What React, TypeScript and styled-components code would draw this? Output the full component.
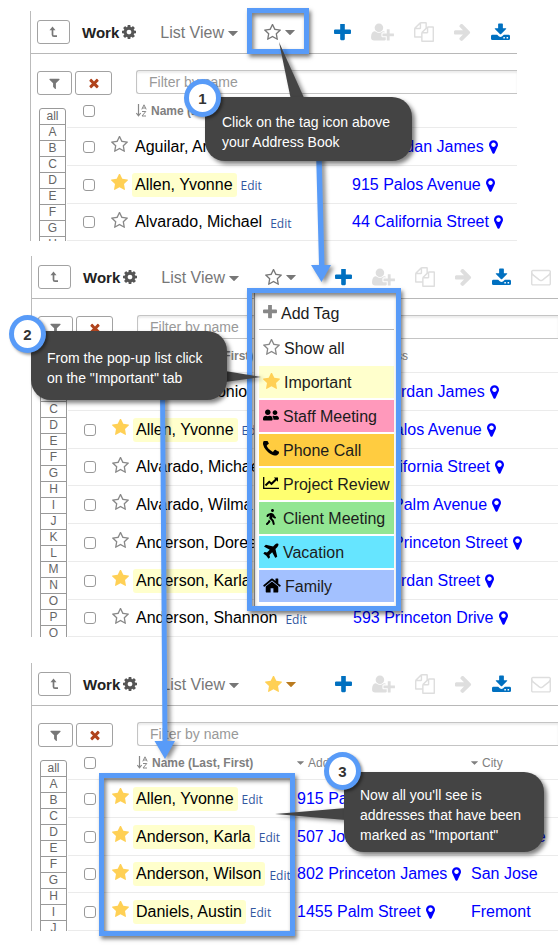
import React from "react";
import styled, { createGlobalStyle, css } from "styled-components";
import { FaUserFriends, FaWalking } from "react-icons/fa";

const GlobalStyle = createGlobalStyle`
  * { box-sizing: border-box; }
  body { margin: 0; background: #fff; color: #000; font-family: "Liberation Sans", Arial, sans-serif; font-size: 16px; }
  button { font: inherit; color: inherit; background: none; border: 0; padding: 0; cursor: pointer; }
  svg { display: block; flex: none; }
`;

const BLUE = "#589bf8";

/* ---------- icons ---------- */

const paths = {
  cog: "M1152 896q0-106-75-181t-181-75-181 75-75 181 75 181 181 75 181-75 75-181zm512-109v222q0 12-8 23t-20 13l-185 28q-19 54-39 91 35 50 107 138 10 12 10 25t-9 23q-27 37-99 108t-94 71q-12 0-26-9l-138-108q-44 23-91 38-16 136-29 186-7 28-36 28h-222q-14 0-24.5-8.5t-11.5-21.5l-28-184q-49-16-90-37l-141 107q-10 9-25 9-14 0-25-11-126-114-165-168-7-10-7-23 0-12 8-23 15-21 51-66.5t54-70.5q-27-50-41-99l-183-27q-13-2-21-12.5t-8-23.5v-222q0-12 8-23t19-13l186-28q14-46 39-92-40-57-107-138-10-12-10-24 0-10 9-23 26-36 98.5-107.5t94.5-71.5q13 0 26 10l138 107q44-23 91-38 16-136 29-186 7-28 36-28h222q14 0 24.5 8.5t11.5 21.5l28 184q49 16 90 37l142-107q9-9 24-9 13 0 25 10 129 119 165 170 7 8 7 22 0 12-8 23-15 21-51 66.5t-54 70.5q26 50 41 98l183 28q13 2 21 12.5t8 23.5z",
  plus: "M1600 736v192q0 40-28 68t-68 28h-416v416q0 40-28 68t-68 28h-192q-40 0-68-28t-28-68v-416h-416q-40 0-68-28t-28-68v-192q0-40 28-68t68-28h416v-416q0-40 28-68t68-28h192q40 0 68 28t28 68v416h416q40 0 68 28t28 68z",
  starOutline: "M1201 1004l306-297-422-62-189-382-189 382-422 62 306 297-73 421 378-199 377 199zm527-357q0 22-26 48l-363 354 86 500q1 7 1 20 0 50-41 50-19 0-40-12l-449-236-449 236q-22 12-40 12-21 0-31.5-14.5t-10.5-35.5q0-6 2-20l86-500-364-354q-25-27-25-48 0-37 56-46l502-73 225-455q19-41 49-41t49 41l225 455 502 73q56 9 56 46z",
  star: "M1728 647q0 22-26 48l-363 354 86 500q1 7 1 20 0 21-10.5 35.5t-30.5 14.5q-19 0-40-12l-449-236-449 236q-22 12-40 12-21 0-31.5-14.5t-10.5-35.5q0-6 2-20l86-500-364-354q-25-27-25-48 0-37 56-46l502-73 225-455q19-41 49-41t49 41l225 455 502 73q56 9 56 46z",
  times: "M1490 1322q0 40-28 68l-136 136q-28 28-68 28t-68-28l-294-294-294 294q-28 28-68 28t-68-28l-136-136q-28-28-28-68t28-68l294-294-294-294q-28-28-28-68t28-68l136-136q28-28 68-28t68 28l294 294 294-294q28-28 68-28t68 28l136 136q28 28 28 68t-28 68l-294 294 294 294q28 28 28 68z",
  filter: "M1595 295q17 41-14 70l-493 493v742q0 42-39 59-13 5-25 5-27 0-45-19l-256-256q-19-19-19-45v-486l-493-493q-31-29-14-70 17-39 59-39h1280q42 0 59 39z",
  mail: "M1664 1504v-768q-32 36-69 66-268 206-426 338-51 43-83 67t-86.5 48.5-102.5 24.5h-2q-48 0-102.5-24.5t-86.5-48.5-83-67q-158-132-426-338-37-30-69-66v768q0 13 9.5 22.5t22.5 9.5h1472q13 0 22.5-9.5t9.5-22.5zm0-1051v-24.5l-.5-13-3-12.5-5.5-9-9-7.5-14-2.5h-1472q-13 0-22.5 9.5t-9.5 22.5q0 168 147 284 193 152 401 317 6 5 35 29.5t46 37.5 44.5 31.5 50.5 27.5 43 9h2q20 0 43-9t50.5-27.5 44.5-31.5 46-37.5 35-29.5q208-165 401-317 54-43 100.5-115.5t46.5-131.5zm128-37v1088q0 66-47 113t-113 47h-1472q-66 0-113-47t-47-113v-1088q0-66 47-113t113-47h1472q66 0 113 47t47 113z",
  copy: "M1696 384q40 0 68 28t28 68v1216q0 40-28 68t-68 28h-960q-40 0-68-28t-28-68v-288h-544q-40 0-68-28t-28-68v-672q0-40 20-88t48-76l408-408q28-28 76-48t88-20h416q40 0 68 28t28 68v328q68-40 128-40h416zm-544 213l-299 299h299v-299zm-640-384l-299 299h299v-299zm196 647l316-316v-416h-384v416q0 40-28 68t-68 28h-416v640h512v-256q0-40 20-88t48-76zm956 804v-1152h-384v416q0 40-28 68t-68 28h-416v640h896z",
  arrow: "M1600 960q0 54-37 91l-651 651q-39 37-91 37-51 0-90-37l-75-75q-38-38-38-91t38-91l293-293h-704q-52 0-84.5-37.5t-32.5-90.5v-128q0-53 32.5-90.5t84.5-37.5h704l-293-294q-38-36-38-90t38-90l75-75q38-38 90-38 53 0 91 38l651 651q37 35 37 90z",
  userPlus: "M704 896q-159 0-271.5-112.5t-112.5-271.5 112.5-271.5 271.5-112.5 271.5 112.5 112.5 271.5-112.5 271.5-271.5 112.5zm960 128h352q13 0 22.5 9.5t9.5 22.5v192q0 13-9.5 22.5t-22.5 9.5h-352v352q0 13-9.5 22.5t-22.5 9.5h-192q-13 0-22.5-9.5t-9.5-22.5v-352h-352q-13 0-22.5-9.5t-9.5-22.5v-192q0-13 9.5-22.5t22.5-9.5h352v-352q0-13 9.5-22.5t22.5-9.5h192q13 0 22.5 9.5t9.5 22.5v352zm-736 224q0 52 38 90t90 38h256v238q-68 50-171 50h-874q-121 0-194-69t-73-190q0-53 3.5-103.5t14-109 26.5-108.5 43-97.5 62-81 85.5-53.5 111.5-20q19 0 39 17 79 61 154.5 91.5t164.5 30.5 164.5-30.5 154.5-91.5q20-17 39-17 132 0 217 96h-223q-52 0-90 38t-38 90v192z",
  phone: "M1600 1240q0 27-10 70.5t-21 68.5q-21 50-122 106-94 51-186 51-27 0-53-3.5t-57.5-12.5-47-14.5-55.5-20.5-49-18q-98-35-175-83-127-79-264-216t-216-264q-48-77-83-175-3-9-18-49t-20.5-55.5-14.5-47-12.5-57.5-3.5-53q0-92 51-186 56-101 106-122 25-11 68.5-21t70.5-10q14 0 21 3 18 6 53 76 11 19 30 54t35 63.5 31 53.5q3 4 17.5 25t21.5 35.5 7 28.5q0 20-28.5 50t-62 55-62 53-28.5 46q0 9 5 22.5t8.5 20.5 14 24 11.5 19q76 137 174 235t235 174q2 1 19 11.5t24 14 20.5 8.5 22.5 5q18 0 46-28.5t53-62 55-62 50-28.5q14 0 28.5 7t35.5 21.5 25 17.5q25 15 53.5 31t63.5 35 54 30q70 35 76 53 3 7 3 21z",
  plane: "M1568 160q44 52 12 148t-108 172l-161 161 160 696q5 19-12 33l-128 96q-7 6-19 6-4 0-7-1-15-3-21-16l-279-508-259 259 53 194q5 17-8 31l-96 96q-9 9-23 9h-2q-15-2-24-13l-189-252-252-189q-11-7-13-23-1-13 9-25l96-97q9-9 23-9 6 0 8 1l194 53 259-259-508-279q-14-8-17-24-2-16 9-27l128-128q14-13 30-8l665 159 160-160q76-76 172-108t148 12z",
  home: "M1472 992v480q0 26-19 45t-45 19h-384v-384h-256v384h-384q-26 0-45-19t-19-45v-480q0-1 .5-3t.5-3l575-474 575 474q1 2 1 6zm223-69l-62 74q-8 9-21 11h-3q-13 0-21-7l-692-577-692 577q-12 8-24 7-13-2-21-11l-62-74q-8-10-7-23.5t11-21.5l719-599q32-26 76-26t76 26l244 204v-195q0-14 9-23t23-9h192q14 0 23 9t9 23v408l219 182q10 8 11 21.5t-7 23.5z",
  pin: "M1152 640q0-106-75-181t-181-75-181 75-75 181 75 181 181 75 181-75 75-181zm256 0q0 109-33 179l-364 774q-16 33-47.5 52t-67.5 19-67.5-19-46.5-52l-365-774q-33-70-33-179 0-212 150-362t362-150 362 150 150 362z",
};

type GlyphProps = { name: keyof typeof paths; w: number; h?: number; box?: string };

const Glyph = ({ name, w, h = w, box = "0 0 1792 1792" }: GlyphProps) => (
  <svg width={w} height={h} viewBox={box} fill="currentColor" aria-hidden="true">
    <path d={paths[name]} />
  </svg>
);

const Star = ({ filled, size }: { filled?: boolean; size: number }) => (
  <Glyph name={filled ? "star" : "starOutline"} w={size} box="64 64 1664 1664" />
);

const Caret = ({ w = 10, h = 5 }: { w?: number; h?: number }) => (
  <svg width={w} height={h} viewBox="0 0 10 5" fill="currentColor" aria-hidden="true">
    <path d="M0.6 0h8.8q.8 0 .3.6L5.5 4.7q-.5.5-1 0L.3.6Q-.2 0 .6 0z" />
  </svg>
);

const UpLevelIcon = () => (
  <svg width="9" height="12" viewBox="0 0 9 12" fill="none" stroke="currentColor" aria-hidden="true">
    <path d="M3.5 3v5.700q0 1.500 1.500 1.500H8" strokeWidth="1.7" strokeLinejoin="round" />
    <path d="M3.5 0.500L6.500 4.200H0.500z" fill="currentColor" stroke="none" />
  </svg>
);

const DownloadIcon = () => (
  <svg width="19" height="18" viewBox="0 0 20 18" fill="currentColor" aria-hidden="true">
    <path d="M7.5 0.8q0-.8.8-.8h3.4q.8 0 .8.8V5h3q1 0 .4.8L10.7 11q-.7.7-1.4 0L4.1 5.8Q3.500 5 4.5 5h3z" />
    <path
      fillRule="evenodd"
      d="M1.500 12h5l2 1.800q1.500 1 3 0l2-1.800h5Q20 12 20 13.500v2.500q0 1.500-1.500 1.500h-17Q0 17.500 0 16v-2.500Q0 12 1.500 12zM13 14.200v1.600h1.600v-1.600zM16.400 14.200v1.600H18v-1.600z"
    />
  </svg>
);

const SortIcon = () => (
  <svg width="11" height="13" viewBox="0 0 11 13" aria-hidden="true">
    <path d="M2.500 0v11M0.300 9l2.200 2.800L4.700 9" fill="none" stroke="#888" strokeWidth="1.200" />
    <path d="M5.800 5.400L8 0.800l2.200 4.600M6.500 4h3M6 7.500h3.800L6 12h4" fill="none" stroke="#888" />
  </svg>
);

const ChartIcon = () => (
  <svg width="16" height="12" viewBox="0 0 16 12" fill="none" stroke="currentColor" aria-hidden="true">
    <path d="M.7 0v11.300H16" strokeWidth="1.300" />
    <path d="M2.500 8.500l3.700-3.700 2.300 2L13.500 2" strokeWidth="2" />
    <path d="M10.800 0.500H15v4.200z" fill="currentColor" stroke="none" />
  </svg>
);

/* ---------- page parts ---------- */

const Page = styled.main`
  position: relative;
  display: flex;
  flex-direction: column;
  padding: 11px 0 16px;
`;

const Panel = styled.section<{ $left: number; $right?: number; $gap?: number }>`
  margin: 0 ${(p) => p.$right ?? 0}px ${(p) => p.$gap ?? 0}px ${(p) => p.$left}px;
  border-left: 1px solid #bbb;
`;

const Toolbar = styled.header`
  display: flex;
  align-items: center;
  height: 43px;
  padding-left: 6px;
  border-bottom: 1px solid #b8b8b8;
  color: #777;
`;

const BoxButton = styled.button<{ $width: number; $tone?: string }>`
  display: flex;
  flex: none;
  align-items: center;
  justify-content: center;
  width: ${(p) => p.$width}px;
  height: 24px;
  border: 1px solid #a2a2a2;
  border-radius: 3px;
  color: ${(p) => p.$tone ?? "#777"};
`;

const BookButton = styled.button`
  display: flex;
  flex: none;
  align-items: center;
  gap: 3px;
  margin-left: 12px;
  font-size: 15px;
  font-weight: bold;
  color: #222;
  svg { color: #555; }
`;

const ViewButton = styled.button`
  display: flex;
  flex: none;
  align-items: center;
  gap: 4px;
  margin: 2px 0 0 24px;
  white-space: nowrap;
`;

const TagControl = styled.div`
  position: relative;
  flex: none;
  margin: 1px 0 0 26px;
`;

const TagButton = styled.button<{ $active?: boolean }>`
  display: flex;
  align-items: center;
  gap: 4px;
  color: #777;
  ${(p) => p.$active && css`
    color: #b97a1f;
    svg:first-child { color: #ffd055; }
  `}
`;

const Actions = styled.div`
  display: flex;
  align-items: center;
  gap: 20px;
  margin-left: 39px;
`;

const Action = styled.button<{ $on?: boolean }>`
  flex: none;
  color: ${(p) => (p.$on ? "#0070c0" : "#dedede")};
`;

const FilterBar = styled.div`
  display: flex;
  gap: 3px;
  padding: 17px 0 0 6px;
`;

const FilterInput = styled.input`
  flex: 1;
  min-width: 0;
  height: 24px;
  margin: -1px 0 1px 21px;
  padding: 0 12px;
  border: 1px solid #c4c4c4;
  border-right: 0;
  border-radius: 3px 0 0 3px;
  box-shadow: inset 0 2px 2px rgba(0, 0, 0, 0.08);
  font: 14px "Liberation Sans", Arial, sans-serif;
  outline: 0;
  &::placeholder { color: #999; opacity: 1; }
`;

const Body = styled.div`
  display: flex;
  gap: 1px;
  margin-top: -1px;
  padding-left: 8px;
`;

const LetterIndex = styled.nav`
  contain: size;
  flex: none;
  width: 27px;
  padding-top: 14px;
  overflow: hidden;
`;

const LetterList = styled.div`
  display: flex;
  flex-direction: column;
  border: 1px solid #999;
  border-radius: 3px 3px 0 0;
`;

const Letter = styled.button`
  flex: none;
  height: 16px;
  border-bottom: 1px solid #999;
  font-size: 12px;
  line-height: 15px;
  color: #666;
`;

const Table = styled.table`
  flex: 1;
  min-width: 0;
  table-layout: fixed;
  border-spacing: 0;
  white-space: nowrap;
`;

const Col = styled.col<{ $w?: number }>`
  width: ${(p) => (p.$w ? `${p.$w}px` : "auto")};
`;

const HeadCell = styled.th<{ $bold?: boolean }>`
  height: 34px;
  padding: 0;
  border-bottom: 1px solid #ebebeb;
  font-size: 12px;
  font-weight: ${(p) => (p.$bold ? "bold" : "normal")};
  text-align: left;
  color: #808080;
`;

const HeadLabel = styled.span<{ $inset?: number }>`
  display: flex;
  align-items: center;
  gap: 4px;
  padding-left: ${(p) => p.$inset ?? 0}px;
`;

const Cell = styled.td`
  height: 38px;
  padding: 0;
  border-bottom: 1px solid #ebebeb;
  tr:nth-child(4n + 3) > & { height: 37px; }
`;

const Tick = styled.input`
  display: block;
  appearance: none;
  width: 12px;
  height: 12px;
  margin: 0 0 0 16px;
  border: 1px solid #999;
  border-radius: 3px;
  background: #fff;
`;

const Contact = styled.div`
  display: flex;
  align-items: center;
  padding-left: 3px;
`;

const StarButton = styled.button<{ $on?: boolean }>`
  margin: 0 4px 4px 0;
  color: ${(p) => (p.$on ? "#ffd055" : "#888")};
`;

const Name = styled.span<{ $on?: boolean }>`
  padding: 0 4px 0 3px;
  border-radius: 3px;
  line-height: 24px;
  background: ${(p) => (p.$on ? "#ffffcc" : "transparent")};
`;

const EditLink = styled.a`
  margin: 2px 0 0 4px;
  font: 12px "Open Sans", sans-serif;
  color: #3257a0;
  text-decoration: none;
`;

const Place = styled.a`
  display: flex;
  align-items: center;
  gap: 5px;
  color: #0000ff;
  text-decoration: none;
`;

const Menu = styled.div`
  position: absolute;
  top: 24px;
  left: -11px;
  z-index: 1;
  display: flex;
  flex-direction: column;
  gap: 2px;
  width: 143px;
  padding: 0 3px 4px 4px;
  border-left: 1px solid #999;
  background: #fff;
`;

const MenuItem = styled.button<{ $bg?: string; $divider?: boolean; $icon?: string }>`
  display: flex;
  align-items: center;
  gap: 4px;
  height: ${(p) => (p.$divider ? 37 : 32)}px;
  padding: ${(p) => (p.$divider ? "6px 4px 0" : "2px 4px 0")};
  border-bottom: ${(p) => (p.$divider ? "1px solid #b8b8b8" : "0")};
  background: ${(p) => p.$bg ?? "transparent"};
  color: #1c1c1c;
  white-space: nowrap;
  svg { color: ${(p) => p.$icon ?? "#000"}; }
`;

const MenuIcon = styled.span<{ $w?: number }>`
  display: flex;
  flex: none;
  justify-content: center;
  width: ${(p) => p.$w ?? 16}px;
  padding-bottom: 4px;
`;

/* ---------- annotations lying over the panels ---------- */

const Frame = styled.div<{ $x: number; $y: number; $w: number; $h: number }>`
  position: absolute;
  z-index: 2;
  left: ${(p) => p.$x}px;
  top: ${(p) => p.$y}px;
  width: ${(p) => p.$w}px;
  height: ${(p) => p.$h}px;
  border: 5px solid ${BLUE};
  box-shadow: 2px 3px 4px rgba(0, 0, 0, 0.5), inset 2px 3px 4px rgba(0, 0, 0, 0.5);
  pointer-events: none;
`;

const Drawing = styled.svg`
  position: absolute;
  z-index: 3;
  left: 0;
  top: 0;
  overflow: visible;
  pointer-events: none;
  filter: drop-shadow(3px 2px 2px rgba(0, 0, 0, 0.45));
`;

const Callout = styled.aside<{ $x: number; $y: number; $w: number; $pad: string }>`
  position: absolute;
  z-index: 4;
  left: ${(p) => p.$x}px;
  top: ${(p) => p.$y}px;
  width: ${(p) => p.$w}px;
  padding: ${(p) => p.$pad};
  border-radius: 4px 20px 20px 20px;
  background: #444;
  box-shadow: 3px 3px 4px rgba(0, 0, 0, 0.5);
  color: #fff;
  font-size: 14px;
  line-height: 20px;
  white-space: nowrap;
`;

const Badge = styled.span<{ $x: number; $y: number }>`
  position: absolute;
  z-index: 5;
  left: ${(p) => p.$x}px;
  top: ${(p) => p.$y}px;
  display: flex;
  align-items: center;
  justify-content: center;
  width: 37px;
  height: 38px;
  border: 5px solid ${BLUE};
  border-radius: 50%;
  background: #fff;
  box-shadow: 2px 2px 3px rgba(0, 0, 0, 0.4);
  color: #333;
  font-size: 15px;
  font-weight: bold;
`;

/* ---------- data ---------- */

type Person = { name: string; street: string; city?: string; starred?: boolean };

const firstRows: Person[] = [
  { name: "Aguilar, Antonio", street: "507 Jordan James" },
  { name: "Allen, Yvonne", street: "915 Palos Avenue", starred: true },
  { name: "Alvarado, Michael", street: "44 California Street" },
];

const allRows: Person[] = [
  ...firstRows,
  { name: "Alvarado, Wilma", street: "1455 Palm Avenue" },
  { name: "Anderson, Doreen", street: "1200 Princeton Street" },
  { name: "Anderson, Karla", street: "507 Jordan Street", starred: true },
  { name: "Anderson, Shannon", street: "593 Princeton Drive" },
];

const importantRows: Person[] = [
  { name: "Allen, Yvonne", street: "915 Palos Avenue", city: "San Jose", starred: true },
  { name: "Anderson, Karla", street: "507 Jordan Street", city: "Sunnyvale", starred: true },
  { name: "Anderson, Wilson", street: "802 Princeton James", city: "San Jose", starred: true },
  { name: "Daniels, Austin", street: "1455 Palm Street", city: "Fremont", starred: true },
];

const ALPHABET = "ABCDEFGHIJKLMNOPQRSTUVWXYZ";

const lettersTo = (last: string) => ["all", ...ALPHABET.slice(0, ALPHABET.indexOf(last) + 1)];

const tags: { label: string; bg?: string; tone?: string; icon: React.ReactNode; w?: number }[] = [
  { label: "Show all", tone: "#888", icon: <Star size={17} />, w: 17 },
  { label: "Important", bg: "#ffffcc", tone: "#ffd055", icon: <Star filled size={17} />, w: 17 },
  { label: "Staff Meeting", bg: "#ff99bb", icon: <FaUserFriends size={16} /> },
  { label: "Phone Call", bg: "#ffcc40", icon: <Glyph name="phone" w={16} box="192 256 1408 1408" /> },
  { label: "Project Review", bg: "#ffff70", icon: <ChartIcon /> },
  { label: "Client Meeting", bg: "#93e693", icon: <FaWalking size={16} /> },
  { label: "Vacation", bg: "#66e5ff", icon: <Glyph name="plane" w={16} box="150 90 1490 1490" /> },
  { label: "Family", bg: "#a3c1ff", icon: <Glyph name="home" w={18} h={15} box="70 220 1652 1340" />, w: 18 },
];

/* ---------- composition ---------- */

const TagMenu = () => (
  <Menu>
    <MenuItem $divider $icon="#888">
      <MenuIcon $w={14}>
        <Glyph name="plus" w={14} box="190 190 1412 1412" />
      </MenuIcon>
      Add Tag
    </MenuItem>
    {tags.map((t) => (
      <MenuItem key={t.label} $bg={t.bg} $icon={t.tone}>
        <MenuIcon $w={t.w}>{t.icon}</MenuIcon>
        {t.label}
      </MenuItem>
    ))}
  </Menu>
);

type BookProps = {
  rows: Person[];
  last: string;
  left: number;
  right?: number;
  gap?: number;
  mail?: boolean;
  menu?: boolean;
  active?: boolean;
};

const AddressBook = ({ rows, last, left, right, gap, mail, menu, active }: BookProps) => (
  <Panel $left={left} $right={right} $gap={gap}>
    <Toolbar>
      <BoxButton $width={33} aria-label="Up one level"><UpLevelIcon /></BoxButton>
      <BookButton>Work<Glyph name="cog" w={14} box="128 128 1536 1536" /></BookButton>
      <ViewButton>List View<Caret /></ViewButton>
      <TagControl>
        <TagButton $active={active} aria-label="Tags"><Star filled={active} size={17} /><Caret /></TagButton>
        {menu && <TagMenu />}
      </TagControl>
      <Actions>
        <Action $on aria-label="Add"><Glyph name="plus" w={17} box="190 190 1412 1412" /></Action>
        <Action aria-label="Add person"><Glyph name="userPlus" w={23} h={20} box="0 0 2048 1792" /></Action>
        <Action aria-label="Copy"><Glyph name="copy" w={20} /></Action>
        <Action aria-label="Move"><Glyph name="arrow" w={17} box="190 190 1430 1550" /></Action>
        <Action $on aria-label="Download"><DownloadIcon /></Action>
        {mail && <Action aria-label="Mail"><Glyph name="mail" w={20} /></Action>}
      </Actions>
    </Toolbar>
    <FilterBar>
      <BoxButton $width={35} aria-label="Filter"><Glyph name="filter" w={13} /></BoxButton>
      <BoxButton $width={37} $tone="#b0431c" aria-label="Clear filter"><Glyph name="times" w={14} /></BoxButton>
      <FilterInput placeholder="Filter by name" aria-label="Filter by name" />
    </FilterBar>
    <Body>
      <LetterIndex aria-label="Letters">
        <LetterList>{lettersTo(last).map((l) => <Letter key={l}>{l}</Letter>)}</LetterList>
      </LetterIndex>
      <Table>
        <colgroup>
          <Col $w={41} />
          <Col $w={active ? 188 : 244} />
          <Col $w={active ? 174 : undefined} />
          {active && <Col />}
        </colgroup>
        <thead>
          <tr>
            <HeadCell><Tick type="checkbox" aria-label="Select all" /></HeadCell>
            <HeadCell $bold><HeadLabel $inset={28}><SortIcon />Name (Last, First)</HeadLabel></HeadCell>
            <HeadCell><HeadLabel><Caret w={7} h={4} />Address</HeadLabel></HeadCell>
            {active && <HeadCell><HeadLabel><Caret w={7} h={4} />City</HeadLabel></HeadCell>}
          </tr>
        </thead>
        <tbody>
          {rows.map((r) => (
            <tr key={r.name}>
              <Cell><Tick type="checkbox" aria-label={`Select ${r.name}`} /></Cell>
              <Cell>
                <Contact>
                  <StarButton $on={r.starred} aria-label="Star"><Star filled={r.starred} size={17} /></StarButton>
                  <Name $on={r.starred}>{r.name}</Name>
                  <EditLink href="#edit">Edit</EditLink>
                </Contact>
              </Cell>
              <Cell><Place href="#map">{r.street}<Glyph name="pin" w={9} h={14} box="384 128 1024 1536" /></Place></Cell>
              {active && <Cell><Place href="#city">{r.city}</Place></Cell>}
            </tr>
          ))}
        </tbody>
      </Table>
    </Body>
  </Panel>
);

export default function App() {
  return (
    <>
      <GlobalStyle />
      <Page>
        <AddressBook rows={firstRows} last="H" left={30} right={41} gap={15} />
        <AddressBook rows={allRows} last="Q" left={31} gap={26} mail menu />
        <AddressBook rows={importantRows} last="J" left={31} mail active />

        <Frame $x={247} $y={8} $w={62} $h={46} />
        <Frame $x={247} $y={288} $w={154} $h={323} />
        <Frame $x={99} $y={773} $w={196} $h={163} />

        <Drawing width="558" height="948" viewBox="0 0 558 948" aria-hidden="true">
          <g fill={BLUE}>
            <path d="M316 150h5.500l3 115h6.500l-9.500 17-10.500-17h8z" />
            <path d="M160 390h5l2.500 351h7.500l-10 18-10.500-18h8z" />
          </g>
          <g fill="#444">
            <path d="M279 42l26 58h-14z" />
            <path d="M261 377l-36-6v11z" />
            <path d="M275 814l71-6v12z" />
          </g>
        </Drawing>

        <Callout $x={205} $y={97} $w={207} $pad="15px 16px 9px 17px">
          Click on the tag icon above<br />your Address Book
        </Callout>
        <Callout $x={31} $y={331} $w={196} $pad="17px 16px 12px">
          From the pop-up list click<br />on the "Important" tab
        </Callout>
        <Callout $x={344} $y={772} $w={200} $pad="13px 16px 7px">
          Now all you'll see is<br />addresses that have been<br />marked as "Important"
        </Callout>

        <Badge $x={184} $y={79}>1</Badge>
        <Badge $x={9} $y={315}>2</Badge>
        <Badge $x={324} $y={752}>3</Badge>
      </Page>
    </>
  );
}
